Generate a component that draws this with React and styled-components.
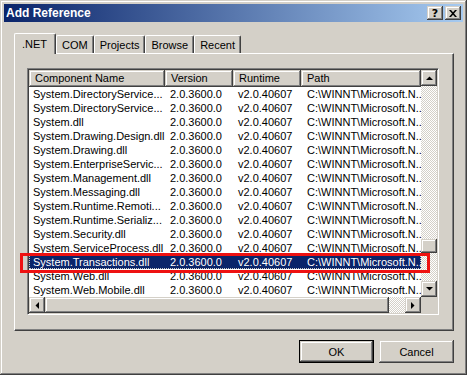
import styled, { createGlobalStyle } from 'styled-components';

const GlobalStyle = createGlobalStyle`
  html, body {
    margin: 0;
    padding: 0;
    background: #d4d0c8;
  }
  body {
    font-family: "Liberation Sans", Tahoma, Arial, sans-serif;
    font-size: 11px;
    color: #000;
  }
`

const raised = `
  box-shadow: inset -1px -1px #404040, inset 1px 1px #d4d0c8,
    inset -2px -2px #808080, inset 2px 2px #fff;
`

const Window = styled.div`
  position: relative;
  box-sizing: border-box;
  width: 467px;
  height: 375px;
  padding: 4px;
  background: #d4d0c8;
  display: flex;
  flex-direction: column;
  ${raised}
`

const TitleBar = styled.div`
  height: 18px;
  display: flex;
  align-items: center;
  padding: 0 2px;
  background: linear-gradient(to right, #0a246a, #a6caf0);
  color: #fff;
  font-weight: bold;
  font-size: 12px;
`

const TitleText = styled.span`
  flex: 1;
`

const TitleButtons = styled.div`
  display: flex;
  gap: 2px;
`

const TitleButton = styled.div`
  width: 16px;
  height: 14px;
  box-sizing: border-box;
  background: #d4d0c8;
  display: flex;
  align-items: center;
  justify-content: center;
  color: #000;
  font-family: "DejaVu Sans", sans-serif;
  font-size: 11px;
  font-weight: bold;
  ${raised}
`

const TabRow = styled.div`
  display: flex;
  align-items: flex-end;
  height: 20px;
  margin: 11px 0 0 10px;
`

const Tab = styled.div`
  position: relative;
  z-index: ${p => (p.$active ? 1 : 0)};
  box-sizing: border-box;
  height: ${p => (p.$active ? 21 : 18)}px;
  margin-bottom: ${p => (p.$active ? -1 : 0)}px;
  padding: 0 ${p => (p.$active ? 8 : 5)}px ${p => (p.$active ? 1 : 0)}px ${p => (p.$active ? 7 : 5)}px;
  display: flex;
  align-items: center;
  background: #d4d0c8;
  border-top: 1px solid #fff;
  border-left: 1px solid #fff;
  border-right: 1px solid #404040;
  border-radius: 2px 2px 0 0;
  box-shadow: inset -1px 0 #808080;
  white-space: nowrap;
`

const Panel = styled.div`
  box-sizing: border-box;
  width: 440px;
  height: 278px;
  margin-left: 10px;
  border-top: 1px solid #fff;
  border-left: 1px solid #fff;
  border-right: 1px solid #404040;
  border-bottom: 1px solid #404040;
  box-shadow: inset -1px -1px #808080;
  padding: 14px 0 0 12px;
`

const ListView = styled.div`
  box-sizing: border-box;
  width: 412px;
  height: 247px;
  border-top: 1px solid #808080;
  border-left: 1px solid #808080;
  border-right: 1px solid #fff;
  border-bottom: 1px solid #fff;
  box-shadow: inset 1px 1px #404040, inset -1px -1px #d4d0c8;
  padding: 1px;
  display: grid;
  grid-template-columns: 392px 16px;
  grid-template-rows: 227px 16px;
`

const ListMain = styled.div`
  background: #fff;
  overflow: hidden;
`

const HeaderRow = styled.div`
  display: flex;
  height: 17px;
`

const HeaderCell = styled.div`
  box-sizing: border-box;
  width: ${p => p.$w}px;
  flex: none;
  height: 17px;
  line-height: 16px;
  padding-left: 6px;
  background: #d4d0c8;
  white-space: nowrap;
  overflow: hidden;
  ${raised}
`

const Row = styled.div`
  display: flex;
  height: 14px;
  line-height: 14px;
  background: ${p => (p.$selected ? '#0a246a' : '#fff')};
  color: ${p => (p.$selected ? '#fff' : '#000')};
  outline: ${p => (p.$selected ? '1px dotted #c8c8c8' : 'none')};
  outline-offset: -1px;
`

const Cell = styled.div`
  box-sizing: border-box;
  width: ${p => p.$w}px;
  flex: none;
  padding-left: ${p => p.$pad}px;
  white-space: nowrap;
  overflow: hidden;
`

const VScroll = styled.div`
  display: flex;
  flex-direction: column;
`

const HScroll = styled.div`
  display: flex;
`

const Track = styled.div`
  flex: ${p => p.$grow ? 1 : 'none'};
  width: ${p => p.$w ? `${p.$w}px` : 'auto'};
  display: flex;
  flex-direction: column;
  background-color: #fff;
  background-image: conic-gradient(#d4d0c8 25%, transparent 0 50%, #d4d0c8 0 75%, transparent 0);
  background-size: 2px 2px;
`

const ScrollButton = styled.div`
  box-sizing: border-box;
  width: ${p => p.$w || 16}px;
  height: ${p => p.$h || 16}px;
  flex: none;
  margin-top: ${p => p.$top || 0}px;
  background: #d4d0c8;
  display: flex;
  align-items: center;
  justify-content: center;
  ${raised}
`

const Corner = styled.div`
  background: #d4d0c8;
`

const ButtonRow = styled.div`
  width: 440px;
  margin: 9px 0 0 10px;
  display: flex;
  justify-content: flex-end;
  gap: 5px;
`

const Button = styled.div`
  box-sizing: border-box;
  width: 75px;
  height: 23px;
  display: flex;
  align-items: center;
  justify-content: center;
  background: #d4d0c8;
  border: ${p => (p.$default ? '1px solid #000' : 'none')};
  ${raised}
`

const Callout = styled.div`
  position: absolute;
  left: 20px;
  top: 253px;
  width: 410px;
  height: 20px;
  box-sizing: border-box;
  border: 3px solid #ee1111;
  pointer-events: none;
`

const columns = [
  { label: 'Component Name', width: 136, pad: 4 },
  { label: 'Version', width: 68, pad: 5 },
  { label: 'Runtime', width: 68, pad: 5 },
  { label: 'Path', width: 120, pad: 6 },
]

const names = [
  'System.DirectoryService...',
  'System.DirectoryService...',
  'System.dll',
  'System.Drawing.Design.dll',
  'System.Drawing.dll',
  'System.EnterpriseServic...',
  'System.Management.dll',
  'System.Messaging.dll',
  'System.Runtime.Remoti...',
  'System.Runtime.Serializ...',
  'System.Security.dll',
  'System.ServiceProcess.dll',
  'System.Transactions.dll',
  'System.Web.dll',
  'System.Web.Mobile.dll',
]

const tabs = ['.NET', 'COM', 'Projects', 'Browse', 'Recent']

function Arrow({ dir }) {
  const pts = {
    up: '0,4 3.5,0.5 7,4',
    down: '0,0 7,0 3.5,3.5',
    left: '4,0 4,7 0.5,3.5',
    right: '0,0 0,7 3.5,3.5',
  }[dir]
  const vertical = dir === 'up' || dir === 'down'
  return (
    <svg width={vertical ? 7 : 4} height={vertical ? 4 : 7}>
      <polygon points={pts} fill="#000" />
    </svg>
  )
}

function App() {
  return (
    <>
      <GlobalStyle />
      <Window>
        <TitleBar>
          <TitleText>Add Reference</TitleText>
          <TitleButtons>
            <TitleButton>?</TitleButton>
            <TitleButton>
              <svg width="8" height="7">
                <path d="M0 0h2l2 2.3 2-2.3h2L5 3.5 8 7H6L4 4.7 2 7H0l3-3.5z" fill="#000" />
              </svg>
            </TitleButton>
          </TitleButtons>
        </TitleBar>

        <TabRow>
          {tabs.map((t, i) => (
            <Tab key={t} $active={i === 0}>{t}</Tab>
          ))}
        </TabRow>

        <Panel>
          <ListView>
            <ListMain>
              <HeaderRow>
                {columns.map(c => (
                  <HeaderCell key={c.label} $w={c.width}>{c.label}</HeaderCell>
                ))}
              </HeaderRow>
              {names.map((n, i) => (
                <Row key={i} $selected={n === 'System.Transactions.dll'}>
                  <Cell $w={columns[0].width} $pad={columns[0].pad}>{n}</Cell>
                  <Cell $w={columns[1].width} $pad={columns[1].pad}>2.0.3600.0</Cell>
                  <Cell $w={columns[2].width} $pad={columns[2].pad}>v2.0.40607</Cell>
                  <Cell $w={columns[3].width} $pad={columns[3].pad}>{'C:\\WINNT\\Microsoft.N..'}</Cell>
                </Row>
              ))}
            </ListMain>
            <VScroll>
              <ScrollButton><Arrow dir="up" /></ScrollButton>
              <Track $grow>
                <ScrollButton $h={14} $top={153} />
              </Track>
              <ScrollButton><Arrow dir="down" /></ScrollButton>
            </VScroll>
            <HScroll>
              <ScrollButton><Arrow dir="left" /></ScrollButton>
              <ScrollButton $w={344} />
              <Track $w={16} />
              <ScrollButton><Arrow dir="right" /></ScrollButton>
            </HScroll>
            <Corner />
          </ListView>
        </Panel>

        <ButtonRow>
          <Button $default>OK</Button>
          <Button>Cancel</Button>
        </ButtonRow>

        <Callout />
      </Window>
    </>
  )
}

export default App
